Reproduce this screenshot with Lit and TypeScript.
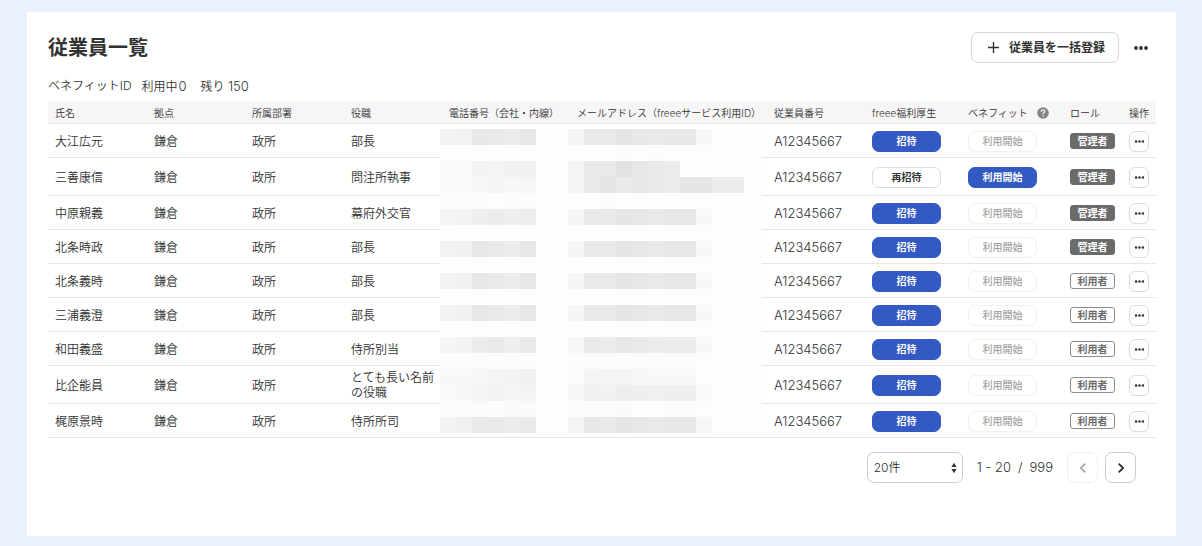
import { LitElement, html, css, svg } from "lit";
import { customElement } from "lit/decorators.js";
import { classMap } from "lit/directives/class-map.js";

interface Employee {
  name: string;
  title: string;
  admin?: boolean;
  invited?: boolean;
  tall?: boolean;
}

const EMPLOYEES: Employee[] = [
  { name: "大江広元", title: "部長", admin: true },
  { name: "三善康信", title: "問注所執事", admin: true, invited: true, tall: true },
  { name: "中原親義", title: "幕府外交官", admin: true },
  { name: "北条時政", title: "部長", admin: true },
  { name: "北条義時", title: "部長" },
  { name: "三浦義澄", title: "部長" },
  { name: "和田義盛", title: "侍所別当" },
  { name: "比企能員", title: "とても長い名前の役職", tall: true },
  { name: "梶原景時", title: "侍所所司" },
];

const COLUMNS = [99, 98, 99, 98, 128, 197, 98, 96, 102, 59, 34];

// Grey levels of the privacy mask, one 16px tile per entry: phone tiles, then mail tiles.
const MASK: [string, string][] = [
  ["f3 f2 e8 e9 eb e7", "f5 e9 e9 e4 e8 e9 e8 e8 f8"],
  ["fd fd fd fd fd fd", "fd fd fd fc fd fb fd fd fd"],
  ["f9 fa f3 f4 f1 f0", "f4 e9 e9 e2 e7 e9 ec"],
  ["fa fa f7 f5 f7 f6", "f5 ea e4 ea e7 e9 eb e6 e6 ec ec"],
  ["fc fc fb fd fb fc", "fd fd fc fd fd fd fd fd fd"],
  ["f4 f3 ee ec ef ed", "f5 ea ea e6 e8 e9 e8 e8 f8"],
  ["fd fd fd fd fd fd", "fd fd fd fd fd fd fd fd fd"],
  ["f2 f0 e8 e9 eb e7", "f5 e9 e9 e4 e8 e9 e8 e8 f8"],
  ["fd fd fd fd fd fd", "fd fd fd fd fd fd fd fd fd"],
  ["f3 f1 e8 e9 eb e8", "f5 e9 ea e5 e8 ea e8 e8 f8"],
  ["fd fd fd fd fd fd", "fd fd fd fd fd fd fd fd fd"],
  ["f3 f0 e8 e9 eb e7", "f5 e9 e9 e4 e8 e9 e8 e8 f8"],
  ["fd fd fd fd fd fd", "fd fd fd fd fd fd fd fd fd"],
  ["f5 f3 ec ea ee ea", "f6 ea ec e7 ea ec eb eb f8"],
  ["fc fc fb fc fc fc", "fc fb fc fb fb fb fc fb fd"],
  ["f8 f8 f6 f5 f3 f1", "fb f5 f5 f4 f7 f8 f8 f8 fd"],
  ["f9 f8 f5 f2 f5 f4", "f7 f0 f1 ee ef f0 ef ef fa"],
  ["fb fb fb fc fa fa", "fc fb fb fa fd fd fc fc fd"],
  ["f3 f0 e9 e9 ec e9", "f5 e8 e9 e4 e7 e9 e8 e8 f7"],
];

const dots = (size: number, r: number) => html`
  <svg class="glyph" width=${size} height=${size} viewBox="0 0 16 16" fill="currentColor" aria-hidden="true">
    <circle cx="3" cy="8" r=${r} /><circle cx="8" cy="8" r=${r} /><circle cx="13" cy="8" r=${r} />
  </svg>`;

@customElement("app-root")
export class AppRoot extends LitElement {
  static styles = css`
    :host {
      display: flex;
      box-sizing: border-box;
      min-height: 100vh;
      padding: 12px 26px 10px 27px;
      background: #ebf2ff;
      color: #323232;
      font: 350 12px/15px Inter, "Noto Sans CJK JP", sans-serif;
    }
    * { box-sizing: border-box; }
    button, select { font: inherit; color: inherit; margin: 0; }
    .glyph { display: block; flex: none; }
    .card {
      flex: 1;
      min-width: 0;
      background: #fff;
      padding: 20px 20px 20px 21px;
    }
    .head { display: flex; align-items: center; height: 31px; }
    h1 { margin: 0; padding-top: 2px; flex: 1; font-size: 20px; line-height: 31px; font-weight: 700; }
    .add {
      display: flex;
      align-items: center;
      gap: 9px;
      height: 31px;
      padding: 0 13px 0 15px;
      border: 1px solid #d7d7d7;
      border-radius: 7px;
      background: #fff;
      font-weight: 700;
    }
    .menu { border: 0; background: none; padding: 0 7px; margin-left: 7px; }
    .summary { display: flex; gap: 10px; margin: 15px 0 6px; line-height: 16px; }
    .summary p { margin: 0; }
    .summary .left { margin-left: 4px; }
    .num { font-size: 13px; }
    .used { margin-left: 1px; }
    .sheet { position: relative; }
    table { width: 100%; table-layout: fixed; border-collapse: separate; border-spacing: 0; }
    th, td {
      text-align: left;
      font-weight: 350;
      white-space: nowrap;
      border-bottom: 1px solid #e6e6e6;
    }
    th { height: 23px; padding: 2px 0 0 7px; font-size: 10px; background: #f7f5f6; }
    td { height: 34px; padding: 4px 0 3px 7px; }
    tr.tall td { height: 38px; }
    .title { white-space: normal; }
    .with-help { display: flex; align-items: center; gap: 9px; }
    .pill {
      display: block;
      width: 69px;
      height: 21px;
      padding: 0;
      border: 1px solid #dcdcdc;
      border-radius: 7px;
      background: #fff;
      font-size: 10px;
      line-height: 19px;
      font-weight: 700;
      text-align: center;
    }
    .pill.primary { background: #3359c2; border-color: #3359c2; color: #fff; }
    .pill:disabled { color: #a3a3a3; border-color: #f0f0f0; font-weight: 500; }
    .tag {
      display: block;
      width: 45px;
      height: 16px;
      border: 1px solid #8c8c8c;
      border-radius: 3px;
      color: #6b6b6b;
      font-size: 10px;
      line-height: 14px;
      font-weight: 700;
      text-align: center;
    }
    .tag.admin { background: #6b6b6b; border-color: #6b6b6b; color: #fff; }
    .more {
      display: grid;
      place-items: center;
      width: 20px;
      height: 21px;
      padding: 0;
      border: 1px solid #dcdcdc;
      border-radius: 6px;
      background: #fff;
    }
    .mask { position: absolute; left: 392px; top: 28px; display: block; }
    .pager {
      display: flex;
      justify-content: flex-end;
      align-items: center;
      padding: 14px 20px 0 0;
    }
    .size { position: relative; display: flex; align-items: center; }
    .size select {
      appearance: none;
      width: 96px;
      height: 31px;
      padding: 0 20px 0 6px;
      border: 1px solid #ccc;
      border-radius: 7px;
      background: #fff;
    }
    .size svg { position: absolute; right: 6px; pointer-events: none; }
    .range { display: flex; gap: 7px; margin: 0 14px; font-size: 13px; }
    .step {
      display: grid;
      place-items: center;
      width: 31px;
      height: 31px;
      padding: 0;
      border: 1px solid #ccc;
      border-radius: 7px;
      background: #fff;
      margin-left: 7px;
    }
    .range + .step { margin-left: 0; }
    .step:disabled { border-color: #f0f0f0; color: #a3a3a3; }
  `;

  private maskRow(levels: string, x: number, y: number) {
    return levels.split(" ").map(
      (v, i) => svg`<rect x=${x + i * 16} y=${y} width="16" height="16" fill=${"#" + v + v + v} />`,
    );
  }

  private renderRow(e: Employee) {
    return html`
      <tr class=${classMap({ tall: !!e.tall })}>
        <td>${e.name}</td>
        <td>鎌倉</td>
        <td>政所</td>
        <td class="title">${e.title}</td>
        <td></td>
        <td></td>
        <td class="num">A12345667</td>
        <td>
          <button class=${classMap({ pill: true, primary: !e.invited })}>${e.invited ? "再招待" : "招待"}</button>
        </td>
        <td>
          <button class=${classMap({ pill: true, primary: !!e.invited })} ?disabled=${!e.invited}>利用開始</button>
        </td>
        <td><span class=${classMap({ tag: true, admin: !!e.admin })}>${e.admin ? "管理者" : "利用者"}</span></td>
        <td><button class="more" aria-label="操作">${dots(11, 1.8)}</button></td>
      </tr>`;
  }

  render() {
    return html`
      <main class="card">
        <header class="head">
          <h1>従業員一覧</h1>
          <button class="add">
            <svg class="glyph" width="13" height="13" viewBox="0 0 13 13" fill="none" stroke="currentColor" stroke-width="1.4" aria-hidden="true">
              <path d="M6.5 1v11M1 6.5h11" />
            </svg>
            従業員を一括登録
          </button>
          <button class="menu" aria-label="メニュー">${dots(16, 1.9)}</button>
        </header>
        <div class="summary">
          <p>ベネフィットID</p>
          <p>利用中<span class="num used">0</span></p>
          <p class="left">残り <span class="num">150</span></p>
        </div>
        <div class="sheet">
          <table>
            <colgroup>${COLUMNS.map((w) => html`<col width=${w} />`)}</colgroup>
            <thead>
              <tr>
                <th>氏名</th>
                <th>拠点</th>
                <th>所属部署</th>
                <th>役職</th>
                <th>電話番号（会社・内線）</th>
                <th>メールアドレス（freeeサービス利用ID）</th>
                <th>従業員番号</th>
                <th>freee福利厚生</th>
                <th>
                  <span class="with-help">ベネフィット
                    <svg class="glyph" width="12" height="12" viewBox="0 0 12 12" aria-hidden="true">
                      <circle cx="6" cy="6" r="5.8" fill="#858383" />
                      <path d="M4.2 4.7C4.2 3.5 5 2.9 6 2.9s1.8.6 1.8 1.6c0 1.2-1.7 1.3-1.7 2.5" fill="none" stroke="#f7f5f6" stroke-width="1.2" />
                      <circle cx="6.1" cy="8.7" r=".8" fill="#f7f5f6" />
                    </svg>
                  </span>
                </th>
                <th>ロール</th>
                <th>操作</th>
              </tr>
            </thead>
            <tbody>${EMPLOYEES.map((e) => this.renderRow(e))}</tbody>
          </table>
          <svg class="mask" width="322" height="304" shape-rendering="crispEdges" aria-hidden="true">
            <rect width="322" height="304" fill="#fefefe" />
            ${MASK.map(([phone, mail], i) => [this.maskRow(phone, 0, i * 16), this.maskRow(mail, 128, i * 16)])}
          </svg>
        </div>
        <nav class="pager">
          <div class="size">
            <select aria-label="表示件数"><option>20件</option></select>
            <svg width="6" height="12" viewBox="0 0 6 12" fill="currentColor" aria-hidden="true">
              <path d="M3 .8 5.6 5H.4ZM3 11.2 5.6 7H.4Z" />
            </svg>
          </div>
          <span class="range"><span>1 - 20</span><span>/</span><span>999</span></span>
          <button class="step" disabled aria-label="前へ">
            <svg class="glyph" width="12" height="12" viewBox="0 0 12 12" fill="none" stroke="currentColor" stroke-width="1.7"><path d="M8.3 1.6 3.9 6l4.4 4.4" /></svg>
          </button>
          <button class="step" aria-label="次へ">
            <svg class="glyph" width="12" height="12" viewBox="0 0 12 12" fill="none" stroke="currentColor" stroke-width="1.9"><path d="M3.7 1.6 8.1 6l-4.4 4.4" /></svg>
          </button>
        </nav>
      </main>`;
  }
}
